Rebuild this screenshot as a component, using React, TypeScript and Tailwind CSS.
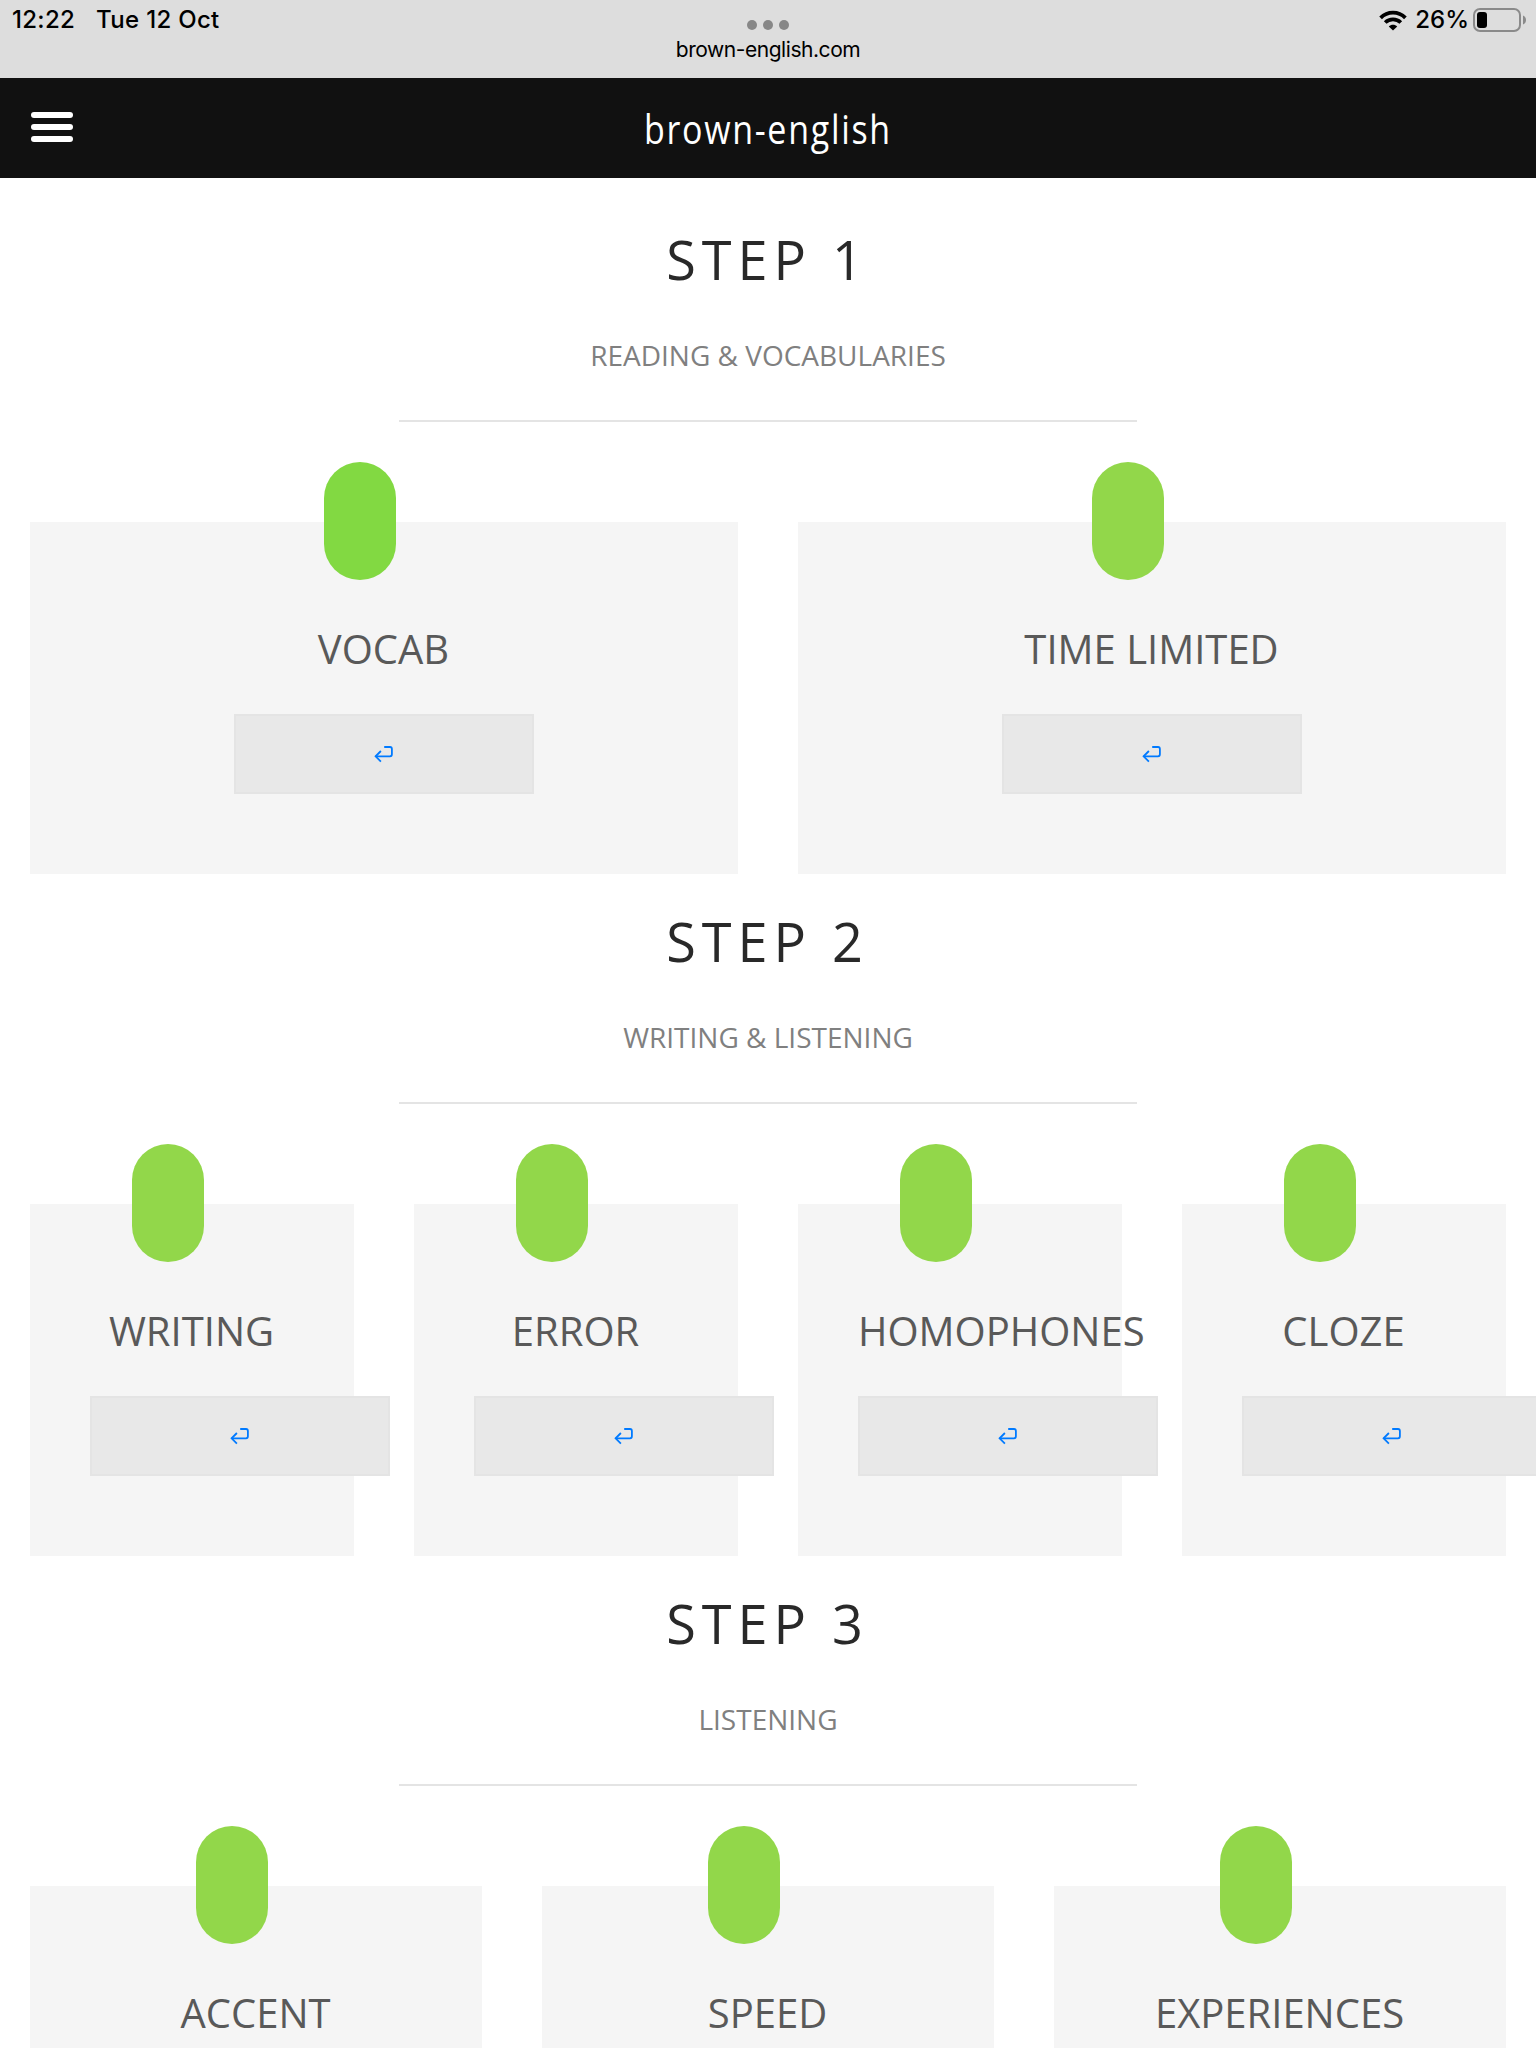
import { ReactNode } from 'react';

interface Lesson {
  label: string;
  pressed?: boolean;
}

interface Step {
  title: string;
  subtitle: string;
  columns: string;
  lessons: Lesson[];
}

const steps: Step[] = [
  {
    title: 'STEP 1',
    subtitle: 'READING & VOCABULARIES',
    columns: 'grid-cols-2',
    lessons: [{ label: 'VOCAB', pressed: true }, { label: 'TIME LIMITED' }],
  },
  {
    title: 'STEP 2',
    subtitle: 'WRITING & LISTENING',
    columns: 'grid-cols-4',
    lessons: [
      { label: 'WRITING' },
      { label: 'ERROR' },
      { label: 'HOMOPHONES' },
      { label: 'CLOZE' },
    ],
  },
  {
    title: 'STEP 3',
    subtitle: 'LISTENING',
    columns: 'grid-cols-3',
    lessons: [{ label: 'ACCENT' }, { label: 'SPEED' }, { label: 'EXPERIENCES' }],
  },
];

function WifiIcon() {
  return (
    <svg width="28" height="21" viewBox="0 0 28 21" fill="none" stroke="#000" strokeWidth="3.8">
      <path d="M1.6 7.8C8.5 1 19.5 1 26.4 7.8" />
      <path d="M6.2 12.5c4.3-4.2 11.3-4.2 15.6 0" />
      <path d="M14 20.5 9.8 16.4c2.2-2.3 6.2-2.3 8.4 0z" fill="#000" stroke="none" />
    </svg>
  );
}

function BatteryIcon() {
  return (
    <svg width="53" height="24" viewBox="0 0 53 24" fill="none">
      <rect x="1" y="1" width="46" height="22" rx="6" stroke="#8a8a8a" strokeWidth="2" />
      <rect x="4" y="4" width="10" height="16" rx="3" fill="#000" />
      <path d="M50 7.5c4 1.5 4 7.5 0 9z" fill="#8a8a8a" />
    </svg>
  );
}

function ReturnIcon() {
  return (
    <svg width="20" height="18" viewBox="0 0 20 18" fill="none" stroke="#007aff" strokeWidth="1.8">
      <path d="M11.2 2H17Q18.9 2 18.9 4V9.3Q18.9 11.3 17 11.3H2.6" />
      <path d="M7.9 6 2.6 11.3 7.9 16.6" />
    </svg>
  );
}

function StatusBar() {
  return (
    <div className="grid h-[78px] grid-cols-3 bg-[#dddddd] font-[Inter,sans-serif] text-black">
      <div className="flex h-10 items-center gap-[21px] pl-3 text-2xl font-medium tracking-[0.3px]">
        <span>12:22</span>
        <span>Tue 12 Oct</span>
      </div>
      <div className="flex flex-col items-center pt-5">
        <div className="flex gap-1.5">
          <span className="size-2.5 rounded-full bg-[#878787]" />
          <span className="size-2.5 rounded-full bg-[#878787]" />
          <span className="size-2.5 rounded-full bg-[#878787]" />
        </div>
        <span className="mt-1.5 text-[21px] leading-7 tracking-[-0.45px]">brown-english.com</span>
      </div>
      <div className="flex h-10 items-center justify-end pr-2.5 text-2xl font-medium">
        <WifiIcon />
        <span className="mr-1 ml-2">26%</span>
        <BatteryIcon />
      </div>
    </div>
  );
}

function Header() {
  return (
    <header className="grid h-[100px] grid-cols-3 items-center bg-[#111111] text-white">
      <button className="mb-0.5 ml-[31px] flex w-[42px] flex-col gap-1.5">
        <span className="h-1.5 rounded-full bg-white" />
        <span className="h-1.5 rounded-full bg-white" />
        <span className="h-1.5 rounded-full bg-white" />
      </button>
      <h1 className="pt-0.5 text-center text-[40px] leading-[50px] tracking-[2px]">
        <span className="inline-block scale-x-85">brown-english</span>
      </h1>
    </header>
  );
}

function LessonCard({ label, pressed }: Lesson) {
  return (
    <div className="mx-[30px] h-[352px] bg-[#f5f5f5] px-[60px]">
      <div className="-mt-[60px] flex justify-center pr-12">
        <span
          className={`h-[118px] w-[72px] shrink-0 rounded-full ${
            pressed ? 'bg-[#82d942]' : 'bg-[#92d74a]'
          }`}
        />
      </div>
      <h3 className="mt-[41px] pr-px text-center text-[40px] leading-[56px] whitespace-nowrap text-[#595959]">
        {label}
      </h3>
      <button className="mx-auto mt-[37px] flex h-20 w-[300px] items-center justify-center border-2 border-[#e4e4e4] bg-[#e8e8e8] pr-0.5 pb-px">
        <ReturnIcon />
      </button>
    </div>
  );
}

function StepSection({ title, subtitle, children }: { title: string; subtitle: string; children: ReactNode }) {
  return (
    <section className="h-[682px] pt-[37px] text-center">
      <h2 className="pr-px text-[54px] leading-[60px] tracking-[6px] text-[#292929]">{title}</h2>
      <p className="mt-[46px] text-[28px] leading-10 text-[#808080]">{subtitle}</p>
      <hr className="mx-auto mt-[45px] mb-[100px] w-[738px] border-t-2 border-[#e4e4e4]" />
      {children}
    </section>
  );
}

export default function App() {
  return (
    <div className="h-[2048px] w-[1536px] overflow-hidden bg-white font-['Open_Sans',sans-serif]">
      <StatusBar />
      <Header />
      <main className="pt-3.5">
        {steps.map((step) => (
          <StepSection key={step.title} title={step.title} subtitle={step.subtitle}>
            <div className={`grid ${step.columns}`}>
              {step.lessons.map((lesson) => (
                <LessonCard key={lesson.label} {...lesson} />
              ))}
            </div>
          </StepSection>
        ))}
      </main>
    </div>
  );
}
